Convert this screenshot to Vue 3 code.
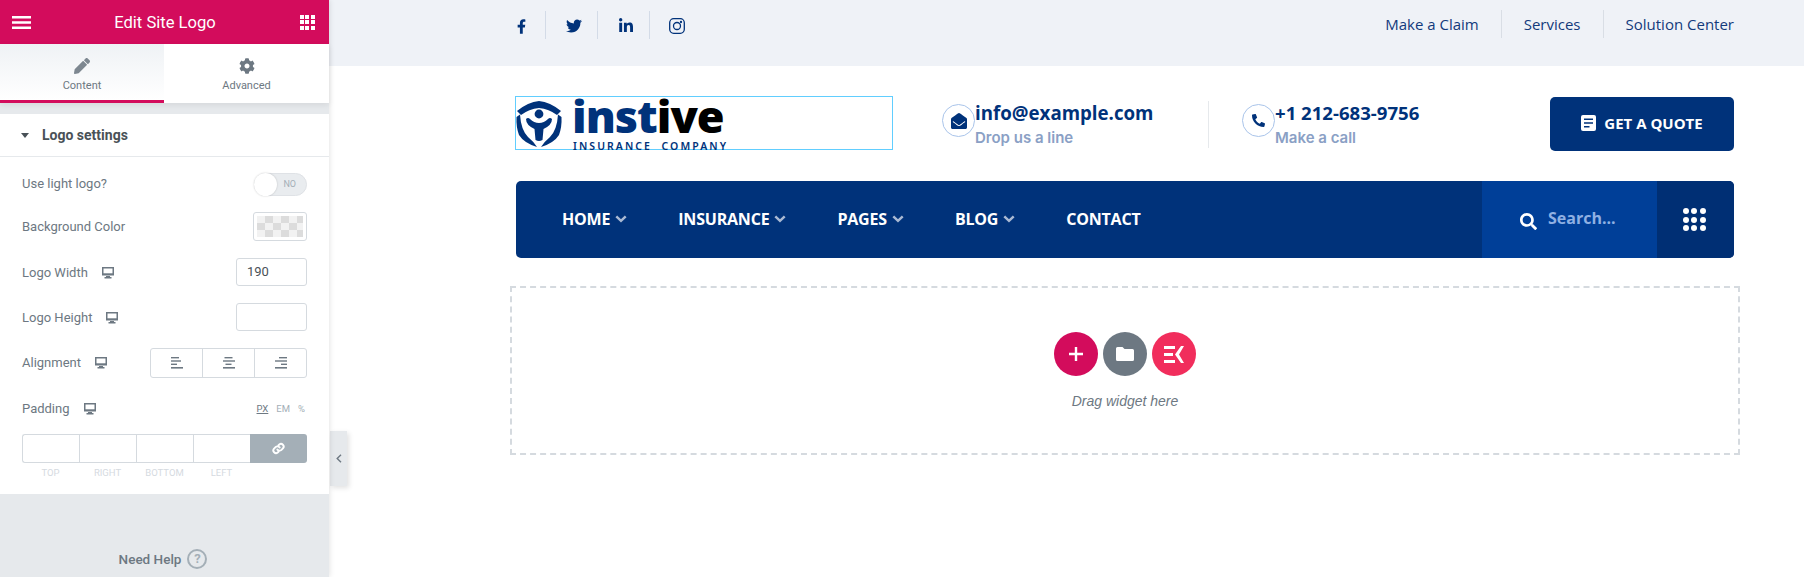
<script setup>
const socials = [
  { name: 'f', vb: '0 0 320 512', w: 9, h: 15, d: 'M279.14 288l14.22-92.66h-88.91v-60.13c0-25.35 12.42-50.06 52.24-50.06h40.42V6.26S260.43 0 225.36 0c-73.22 0-121.08 44.38-121.08 124.72v70.62H22.89V288h81.39v224h100.17V288z' },
  { name: 't', vb: '0 0 512 512', w: 16, h: 16, d: 'M459.37 151.716c.325 4.548.325 9.097.325 13.645 0 138.72-105.583 298.558-298.558 298.558-59.452 0-114.68-17.219-161.137-47.106 8.447.974 16.568 1.299 25.34 1.299 49.055 0 94.213-16.568 130.274-44.832-46.132-.975-84.792-31.188-98.112-72.772 6.498.974 12.995 1.624 19.818 1.624 9.421 0 18.843-1.3 27.614-3.573-48.081-9.747-84.143-51.98-84.143-102.985v-1.299c13.969 7.797 30.214 12.67 47.431 13.319-28.264-18.843-46.781-51.005-46.781-87.391 0-19.492 5.197-37.36 14.294-52.954 51.655 63.675 129.3 105.258 216.365 109.807-1.624-7.797-2.599-15.918-2.599-24.04 0-57.828 46.782-104.934 104.934-104.934 30.213 0 57.502 12.67 76.67 33.137 23.715-4.548 46.456-13.32 66.599-25.34-7.798 24.366-24.366 44.833-46.132 57.827 21.117-2.273 41.584-8.122 60.426-16.243-14.292 20.791-32.161 39.308-52.628 54.253z' },
  { name: 'in', vb: '0 0 448 512', w: 16, h: 16, d: 'M100.28 448H7.4V148.9h92.88zM53.79 108.1C24.09 108.1 0 83.5 0 53.8a53.79 53.79 0 0 1 107.58 0c0 29.7-24.1 54.3-53.79 54.3zM447.9 448h-92.68V302.4c0-34.7-.7-79.2-48.29-79.2-48.29 0-55.69 37.7-55.69 76.7V448h-92.78V148.9h89.08v40.8h1.3c12.4-23.5 42.69-48.3 87.88-48.3 94 0 111.28 61.9 111.28 142.3V448z' }
]
const links = ['Make a Claim', 'Services', 'Solution Center']
const navItems = [
  { label: 'HOME', arrow: true },
  { label: 'INSURANCE', arrow: true },
  { label: 'PAGES', arrow: true },
  { label: 'BLOG', arrow: true },
  { label: 'CONTACT', arrow: false }
]
const paddingLabels = ['TOP', 'RIGHT', 'BOTTOM', 'LEFT']
const dots = Array.from({ length: 9 })
const squares = Array.from({ length: 9 })
const alignIcons = [0, 1, 2]
const monitor = 'M1 1h12v8.500H1zM5 10h4v1h1.500v1.500h-7V11H5z'
</script>

<template>
  <div class="root">
    <aside class="panel">
      <header class="phead">
        <svg class="burger" width="19" height="13" viewBox="0 0 19 13"><path d="M0 0h19v2.6H0zM0 5.2h19v2.6H0zM0 10.4h19V13H0z" fill="#fff"/></svg>
        <span class="ptitle">Edit Site Logo</span>
        <div class="pgrid"><i v-for="(s, i) in squares" :key="i"></i></div>
      </header>
      <div class="tabs">
        <div class="tab active">
          <svg width="16" height="16" viewBox="0 0 512 512"><path fill="#7d8790" d="M497.9 142.1l-46.1 46.1c-4.7 4.7-12.3 4.7-17 0l-111-111c-4.7-4.7-4.7-12.3 0-17l46.1-46.1c18.7-18.7 49.1-18.7 67.9 0l60.1 60.1c18.8 18.7 18.8 49.1 0 67.9zM284.2 99.8L21.6 362.4.4 483.9c-2.9 16.4 11.4 30.6 27.8 27.8l121.5-21.3 262.6-262.6c4.7-4.7 4.7-12.3 0-17l-111-111c-4.8-4.7-12.4-4.7-17.1 0z"/></svg>
          <span>Content</span>
        </div>
        <div class="tab">
          <svg width="16" height="16" viewBox="0 0 512 512"><path fill="#6d7882" d="M487.4 315.7l-42.6-24.6c4.3-23.2 4.3-47 0-70.2l42.6-24.6c4.9-2.8 7.1-8.6 5.5-14-11.1-35.6-30-67.8-54.7-94.6-3.8-4.1-10-5.1-14.8-2.3L380.8 110c-17.9-15.4-38.5-27.3-60.8-35.1V25.8c0-5.6-3.9-10.5-9.4-11.7-36.7-8.2-74.3-7.8-109.2 0-5.5 1.2-9.4 6.1-9.4 11.7V75c-22.2 7.9-42.8 19.8-60.8 35.1L88.7 85.5c-4.9-2.8-11-1.9-14.8 2.3-24.7 26.7-43.6 58.9-54.7 94.6-1.7 5.4.6 11.2 5.5 14L67.3 221c-4.3 23.2-4.3 47 0 70.2l-42.6 24.6c-4.9 2.8-7.1 8.6-5.5 14 11.1 35.6 30 67.8 54.7 94.6 3.8 4.1 10 5.1 14.8 2.3l42.6-24.6c17.9 15.4 38.5 27.3 60.8 35.1v49.2c0 5.6 3.9 10.5 9.4 11.7 36.7 8.2 74.3 7.8 109.2 0 5.5-1.2 9.4-6.1 9.4-11.7v-49.2c22.2-7.9 42.8-19.8 60.8-35.1l42.6 24.6c4.9 2.8 11 1.9 14.8-2.3 24.7-26.7 43.6-58.9 54.7-94.6 1.5-5.5-.7-11.3-5.6-14.1zM256 336c-44.1 0-80-35.9-80-80s35.9-80 80-80 80 35.9 80 80-35.9 80-80 80z"/></svg>
          <span>Advanced</span>
        </div>
      </div>
      <section class="settings">
        <div class="shead">
          <svg width="8" height="5" viewBox="0 0 8 5"><path d="M0 0h8L4 5z" fill="#495157"/></svg>
          <span>Logo settings</span>
        </div>
        <div class="row first">
          <label class="up">Use light logo?</label>
          <div class="toggle"><i></i><span>NO</span></div>
        </div>
        <div class="row swatch-row">
          <label>Background Color</label>
          <div class="swatch"><i></i></div>
        </div>
        <div class="row">
          <label>Logo Width</label>
          <svg class="mon" width="14" height="13" viewBox="0 0 14 13"><path :d="monitor" fill="#6d7882"/><path d="M2.500 2.500h9v4.800h-9z" fill="#fff"/></svg>
          <div class="field">190</div>
        </div>
        <div class="row">
          <label>Logo Height</label>
          <svg class="mon" width="14" height="13" viewBox="0 0 14 13"><path :d="monitor" fill="#6d7882"/><path d="M2.500 2.500h9v4.800h-9z" fill="#fff"/></svg>
          <div class="field"></div>
        </div>
        <div class="row align-row">
          <label class="up">Alignment</label>
          <svg class="mon up" width="14" height="13" viewBox="0 0 14 13"><path :d="monitor" fill="#6d7882"/><path d="M2.500 2.500h9v4.800h-9z" fill="#fff"/></svg>
          <div class="aligns">
            <div v-for="i in alignIcons" :key="i" class="acell">
              <svg width="12" height="12" viewBox="0 0 12 12" fill="#6d7882">
                <rect :x="i === 0 ? 0 : i === 1 ? 1.5 : 4" y="0" width="8" height="1.4"/>
                <rect x="0" y="3.3" :width="i === 0 ? 10 : 12" height="1.4"/>
                <rect :x="i === 0 ? 0 : i === 1 ? 2.5 : 6" y="6.6" width="6" height="1.4"/>
                <rect x="0" y="10" width="12" height="1.6"/>
              </svg>
            </div>
          </div>
        </div>
        <div class="row pad-row">
          <label class="up">Padding</label>
          <svg class="mon up" width="14" height="13" viewBox="0 0 14 13"><path :d="monitor" fill="#6d7882"/><path d="M2.500 2.500h9v4.800h-9z" fill="#fff"/></svg>
          <div class="units"><u>PX</u><span>EM</span><span>%</span></div>
        </div>
        <div class="dims">
          <div v-for="p in paddingLabels" :key="p" class="dim"></div>
          <div class="link">
            <svg width="13" height="13" viewBox="0 0 24 24" fill="none" stroke="#fff" stroke-width="3.6" stroke-linecap="round"><path d="M10 14a5 5 0 0 0 7.5.5l3-3a5 5 0 0 0-7-7l-1.7 1.7"/><path d="M14 10a5 5 0 0 0-7.5-.5l-3 3a5 5 0 0 0 7 7l1.7-1.7"/></svg>
          </div>
        </div>
        <div class="dimlabels">
          <span v-for="p in paddingLabels" :key="p">{{ p }}</span>
        </div>
      </section>
      <div class="help">
        <span>Need Help</span>
        <span class="q">?</span>
      </div>
    </aside>

    <main class="page">
      <div class="collapse">
        <svg width="6" height="9" viewBox="0 0 6 9"><path d="M5 .8 1.2 4.500 5 8.200" fill="none" stroke="#6d7882" stroke-width="1.400"/></svg>
      </div>

      <div class="topbar">
        <div class="social">
          <div v-for="s in socials" :key="s.name" class="soc" :class="'soc-' + s.name">
            <svg :width="s.w" :height="s.h" :viewBox="s.vb"><path :d="s.d" fill="#00327a"/></svg>
          </div>
          <div class="soc soc-ig">
            <svg width="16" height="16" viewBox="0 0 16 16" fill="none" stroke="#00327a" stroke-width="1.300"><rect x=".7" y=".7" width="14.600" height="14.600" rx="4"/><circle cx="8" cy="8" r="3.500"/><circle cx="12" cy="4" r=".5" fill="#00327a"/></svg>
          </div>
        </div>
        <nav class="toplinks">
          <a v-for="l in links" :key="l">{{ l }}</a>
        </nav>
      </div>

      <div class="brand">
        <div class="logo">
          <svg class="mark" width="46" height="48" viewBox="0 0 46 48">
            <g fill="#00327a">
              <path d="M1 11 Q12 2 23 1 Q34 2 45 11 L41 15 Q33 9 23 8 Q13 9 5 15Z"/>
              <circle cx="23" cy="14" r="4.400"/>
              <path d="M10 19 Q12 17 14 19 Q18 23 23 23 Q28 23 32 19 Q34 17 36 19 Q36 25 27.500 29 L26.500 40 Q23 42 19.500 40 L18.500 29 Q10 25 10 19Z"/>
              <path d="M0.500 17 L4 14.500 Q5 30 12 37 Q17 41 21 47 Q8 43 3 35 Q0 27 .5 17Z"/>
              <path d="M45.500 17 L42 14.500 Q41 30 34 37 Q29 41 25 47 Q38 43 43 35 Q46 27 45.500 17Z"/>
            </g>
          </svg>
          <div class="word">
            <div class="wordmark"><b>inst</b><em>ive</em></div>
            <div class="tag">INSURANCE&nbsp; COMPANY</div>
          </div>
        </div>
        <div class="contact c1">
          <div class="cicon">
            <svg width="16" height="16" viewBox="0 0 512 512"><path fill="#00327a" d="M512 464c0 26.51-21.49 48-48 48H48c-26.51 0-48-21.49-48-48V200.724a48 48 0 0 1 18.387-37.776c24.913-19.529 45.501-35.365 164.2-121.511C199.412 29.17 232.797-.347 256 .003c23.198-.354 56.596 29.172 73.413 41.433 118.687 86.137 139.303 101.995 164.2 121.512A48 48 0 0 1 512 200.724V464zm-65.666-196.605c-2.563-3.728-7.7-4.595-11.339-1.907-22.845 16.873-55.462 40.705-105.582 77.079-16.825 12.266-50.21 41.781-73.413 41.43-23.211.344-56.559-29.143-73.413-41.43-50.114-36.37-82.734-60.204-105.582-77.079-3.639-2.688-8.776-1.821-11.339 1.907l-9.072 13.196a7.998 7.998 0 0 0 1.839 10.967c22.887 16.899 55.454 40.69 105.303 76.868 20.274 14.781 56.524 47.813 92.264 47.573 35.724.242 71.961-32.771 92.263-47.573 49.85-36.179 82.418-59.97 105.303-76.868a7.998 7.998 0 0 0 1.839-10.967l-9.071-13.196z"/></svg>
          </div>
          <div class="ctext"><strong>info@example.com</strong><span>Drop us a line</span></div>
        </div>
        <div class="contact c2">
          <div class="cicon">
            <svg class="flip" width="13" height="13" viewBox="0 0 512 512"><path fill="#00327a" d="M493.4 24.6l-104-24c-11.3-2.6-22.9 3.3-27.5 13.9l-48 112c-4.2 9.8-1.4 21.3 6.9 28l60.6 49.6c-36 76.7-98.9 140.5-177.2 177.2l-49.6-60.6c-6.8-8.3-18.2-11.1-28-6.9l-112 48C3.9 366.5-2 378.1.6 389.4l24 104C27.1 504.2 36.7 512 48 512c256.1 0 464-207.5 464-464 0-11.2-7.7-20.9-18.6-23.4z"/></svg>
          </div>
          <div class="ctext"><strong class="tel">+1 212-683-9756</strong><span>Make a call</span></div>
        </div>
        <a class="quote">
          <svg width="15" height="16" viewBox="0 0 15 16"><path d="M2 0h11a2 2 0 0 1 2 2v12a2 2 0 0 1-2 2H2a2 2 0 0 1-2-2V2a2 2 0 0 1 2-2z" fill="#fff"/><path d="M3 3.500h9v1.600H3zM3 7.200h9v1.600H3zM3 11h5.500v1.600H3z" fill="#00327a"/></svg>
          GET A QUOTE
        </a>
      </div>

      <div class="navbar">
        <ul class="menu">
          <li v-for="n in navItems" :key="n.label">
            {{ n.label }}
            <svg v-if="n.arrow" width="12" height="8" viewBox="0 0 12 8"><path d="M1.300 1.400 6 5.800 10.700 1.400" fill="none" stroke="#a9b9d3" stroke-width="2.500"/></svg>
          </li>
        </ul>
        <div class="search">
          <svg width="17" height="17" viewBox="0 0 512 512"><path fill="#fff" d="M505 442.7L405.3 343c-4.5-4.5-10.6-7-17-7H372c27.6-35.3 44-79.7 44-128C416 93.1 322.9 0 208 0S0 93.1 0 208s93.1 208 208 208c48.3 0 92.7-16.4 128-44v16.3c0 6.4 2.5 12.5 7 17l99.7 99.7c9.4 9.4 24.6 9.4 33.9 0l28.3-28.3c9.4-9.4 9.4-24.6.1-34zM208 336c-70.7 0-128-57.2-128-128 0-70.7 57.2-128 128-128 70.7 0 128 57.2 128 128 0 70.7-57.2 128-128 128z"/></svg>
          <span>Search...</span>
        </div>
        <div class="dotsbox">
          <div class="dots"><i v-for="(d, i) in dots" :key="i"></i></div>
        </div>
      </div>

      <div class="drop">
        <div class="btns">
          <div class="circ pink">
            <svg width="14" height="14" viewBox="0 0 14 14"><path d="M5.800 0h2.400v5.800H14v2.400H8.200V14H5.800V8.200H0V5.800h5.800z" fill="#fff"/></svg>
          </div>
          <div class="circ grey">
            <svg width="18" height="14" viewBox="0 0 18 14"><path d="M1.500 0h5l2 2h8a1.500 1.500 0 0 1 1.500 1.500v9A1.500 1.500 0 0 1 16.500 14h-15A1.500 1.500 0 0 1 0 12.500v-11A1.500 1.500 0 0 1 1.500 0z" fill="#fff"/></svg>
          </div>
          <div class="circ red">
            <svg width="20" height="17" viewBox="0 0 20 17" fill="#fff"><path d="M0 0h11v3H0zM0 7h9v3H0zM0 14h11v3H0z"/><path d="M17 0h3l-5 8.500 5 8.500h-3l-6-8.500z"/></svg>
          </div>
        </div>
        <p class="droptext">Drag widget here</p>
      </div>
    </main>
  </div>
</template>

<style>
html, body { margin: 0; background: #fff; overflow: hidden; }
</style>

<style scoped>
.root { display: flex; width: 1804px; height: 577px; overflow: hidden; background: #fff; font-family: Roboto, sans-serif; }

/* panel */
.panel { width: 329px; height: 577px; flex: none; background: #e6e9ec; box-shadow: 0 0 6px rgba(0,0,0,.14); position: relative; z-index: 2; display: flex; flex-direction: column; }
.phead { height: 44px; background: #d30c5c; display: flex; align-items: center; justify-content: space-between; padding: 0 14px 0 12px; color: #fff; }
.ptitle { font-size: 16.6px; margin-right: 1px; }
.pgrid { display: grid; grid-template-columns: repeat(3, 4px); grid-auto-rows: 4px; gap: 1.5px; }
.pgrid i { background: #fff; display: block; }
.tabs { display: flex; height: 59px; background: #fff; box-shadow: 0 2px 6px rgba(0,0,0,.08); position: relative; }
.tab { box-sizing: border-box; display: flex; flex-direction: column; align-items: center; padding-top: 14px; font-size: 11px; color: #6d7882; gap: 5px; }
.tab.active { width: 164px; flex: none; background: linear-gradient(#eff2f5, #fff); border-bottom: 3px solid #d30c5c; }
.tab:not(.active) { flex: 1; }
.settings { margin-top: 11px; height: 380px; background: #fff; box-sizing: border-box; }
.shead { height: 43px; box-sizing: border-box; border-bottom: 1px solid #e6e9ec; display: flex; align-items: center; gap: 13px; padding-left: 21px; font-size: 14px; font-weight: 700; color: #495157; }
.row { display: flex; align-items: center; margin: 17px 22px 0; height: 28px; font-size: 13px; color: #6d7882; }
.row label { margin-right: 13px; }
.row .up { margin-bottom: 2px; }
.row.first { margin-top: 15px; height: 24px; justify-content: space-between; }
.row.swatch-row { margin-top: 16px; height: 29px; justify-content: space-between; }
.row.align-row { height: 30px; }
.row.pad-row { margin-top: 22px; height: 18px; }
.mon { flex: none; }
.toggle { width: 53px; height: 23px; box-sizing: border-box; border-radius: 12px; background: #e9ecef; border: 1px solid #dfe2e6; display: flex; align-items: center; justify-content: flex-end; padding-right: 10px; position: relative; font-size: 9px; color: #a4afb7; }
.toggle i { position: absolute; left: -1px; top: -1px; width: 23px; height: 23px; border-radius: 50%; background: #fff; box-shadow: 0 0 2px rgba(0,0,0,.2); }
.swatch { width: 54px; height: 29px; box-sizing: border-box; border: 1px solid #d5dadf; border-radius: 3px; padding: 3px; }
.swatch i { display: block; height: 100%; background: repeating-conic-gradient(#dcdcdc 0 25%, #f2f2f2 0 50%) 0 0 / 16px 14px; }
.field { margin-left: auto; width: 71px; height: 28px; box-sizing: border-box; border: 1px solid #d5dadf; border-radius: 3px; font-size: 13px; line-height: 26px; padding-left: 10px; color: #495157; }
.aligns { margin-left: auto; width: 157px; height: 30px; box-sizing: border-box; border: 1px solid #d5dadf; border-radius: 3px; display: flex; }
.acell { flex: 1; display: flex; align-items: center; justify-content: center; border-left: 1px solid #d5dadf; }
.acell:first-child { border-left: 0; }
.units { margin-left: auto; display: flex; gap: 8px; font-size: 9.5px; color: #a4afb7; margin-right: 2px; margin-bottom: 2px; }
.units u { color: #6d7882; }
.dims { margin: 16px 22px 0; height: 29px; display: grid; grid-template-columns: repeat(5, 1fr); }
.dim { border: 1px solid #d5dadf; border-right: 0; box-sizing: border-box; }
.dim:first-child { border-radius: 3px 0 0 3px; }
.link { background: #a4afb7; border-radius: 0 3px 3px 0; display: flex; align-items: center; justify-content: center; }
.dimlabels { margin: 3px 22px 0; display: grid; grid-template-columns: repeat(5, 1fr); font-size: 9.5px; line-height: 14px; color: #d5dadf; text-align: center; }
.help { flex: 1; display: flex; align-items: center; justify-content: center; gap: 6px; padding: 46px 3px 0 0; box-sizing: border-box; font-size: 13.5px; font-weight: 500; color: #6d7882; }
.q { width: 16px; height: 16px; border: 2px solid #a4afb7; border-radius: 50%; font-size: 13px; font-weight: 700; line-height: 16px; text-align: center; color: #a4afb7; }

/* page */
.page { flex: 1; min-width: 0; position: relative; }
.collapse { position: absolute; left: 1px; top: 431px; width: 17px; height: 55px; background: #e6e9ec; box-shadow: 2px 2px 5px rgba(0,0,0,.12); display: flex; align-items: center; justify-content: center; }
.topbar { height: 66px; background: #eff2f7; padding: 11px 70px 0 186px; box-sizing: border-box; display: flex; justify-content: space-between; align-items: flex-start; font-family: "Open Sans", sans-serif; }
.social { display: flex; height: 28px; }
.soc { display: flex; align-items: center; height: 28px; box-sizing: border-box; padding-top: 2px; border-right: 1px solid #d3dbe7; }
.soc-f { padding-left: 2px; padding-right: 19px; }
.soc-t { padding-left: 20px; padding-right: 15px; }
.soc-in { padding-left: 20px; padding-right: 15px; }
.soc-ig { border-right: 0; padding-left: 19px; }
.toplinks { display: flex; height: 28px; }
.toplinks a { display: flex; align-items: center; padding: 0 22px; font-size: 15px; font-weight: 500; color: #133a7c; border-right: 1px solid #d9dee5; height: 28px; margin-top: -1px; }
.toplinks a:last-child { border-right: 0; padding-right: 0; }
.brand { display: flex; align-items: flex-start; padding: 30px 70px 0 186px; height: 115px; box-sizing: border-box; }
.logo { width: 378px; height: 54px; box-sizing: border-box; border: 1px solid #61ceff; display: flex; flex: none; }
.mark { margin: 3px 0 0 0; flex: none; }
.word { margin-left: 10px; }
.wordmark { font-family: "Open Sans", sans-serif; font-weight: 800; font-size: 45px; line-height: 38px; letter-spacing: -1px; white-space: nowrap; }
.wordmark b { color: #00327a; font-weight: 800; }
.wordmark em { color: #000; font-style: normal; }
.tag { font-family: "Noto Sans", sans-serif; font-size: 10.5px; font-weight: 600; line-height: 12px; letter-spacing: 2.05px; color: #00327a; white-space: nowrap; margin-top: 5px; margin-left: 1px; }
.contact { display: flex; flex: none; }
.c1 { width: 300px; margin-left: 49px; position: relative; }
.c1::after { content: ""; position: absolute; right: 33px; top: 5px; height: 47px; border-right: 1px solid #e6e9ec; }
.cicon { width: 33px; height: 33px; box-sizing: border-box; border: 1px solid #a9c4ea; border-radius: 50%; display: flex; align-items: center; justify-content: center; margin-top: 8px; flex: none; }
.flip { transform: scaleX(-1); }
.ctext { display: flex; flex-direction: column; }
.ctext strong { font-family: "Open Sans", sans-serif; font-size: 18.7px; font-weight: 700; line-height: 28px; color: #00327a; white-space: nowrap; margin-top: 3px; }
.ctext strong.tel { font-size: 18.6px; }
.ctext span { font-family: Inter, Roboto, sans-serif; font-size: 15px; font-weight: 600; line-height: 20px; color: #8aa0c5; margin-top: 1px; }
.quote { margin-left: auto; width: 184px; height: 54px; margin-top: 1px; background: #00327a; border-radius: 5px; color: #fff; display: flex; align-items: center; justify-content: center; gap: 8px; font-family: "Open Sans", sans-serif; font-size: 15px; font-weight: 700; padding-bottom: 2px; box-sizing: border-box; }
.navbar { margin: 0 70px 0 187px; height: 77px; background: #00327a; border-radius: 5px; display: flex; overflow: hidden; font-family: "Open Sans", sans-serif; }
.menu { list-style: none; margin: 0; padding: 0 0 0 46px; flex: 1; display: flex; align-items: center; gap: 51px; color: #fff; font-size: 16px; font-weight: 700; letter-spacing: -.2px; }
.menu li { display: flex; align-items: center; gap: 5px; margin-top: -2px; }
.search { width: 175px; flex: none; box-sizing: border-box; background: #003f98; display: flex; align-items: center; padding: 3px 0 0 38px; gap: 11px; color: #8fb0e3; font-size: 16px; font-weight: 700; }
.search span { margin-top: -6px; }
.dotsbox { width: 77px; flex: none; background: #002f74; display: flex; align-items: center; justify-content: center; padding-right: 3px; box-sizing: border-box; }
.dots { display: grid; grid-template-columns: repeat(3, 6px); grid-auto-rows: 6px; gap: 2.5px; }
.dots i { background: #fff; border-radius: 50%; display: block; }
.drop { margin: 28px 64px 0 181px; height: 169px; box-sizing: border-box; border: 2px dashed #d5dadf; display: flex; flex-direction: column; align-items: center; padding-top: 44px; }
.btns { display: flex; gap: 5px; }
.circ { width: 44px; height: 44px; border-radius: 50%; display: flex; align-items: center; justify-content: center; }
.pink { background: #d30c5c; }
.grey { background: #6d7882; }
.red { background: #f12d5c; }
.droptext { margin: 16px 0 0; font-family: "Liberation Sans", sans-serif; font-size: 14px; font-style: italic; line-height: 18px; color: #6d7882; }
</style>
